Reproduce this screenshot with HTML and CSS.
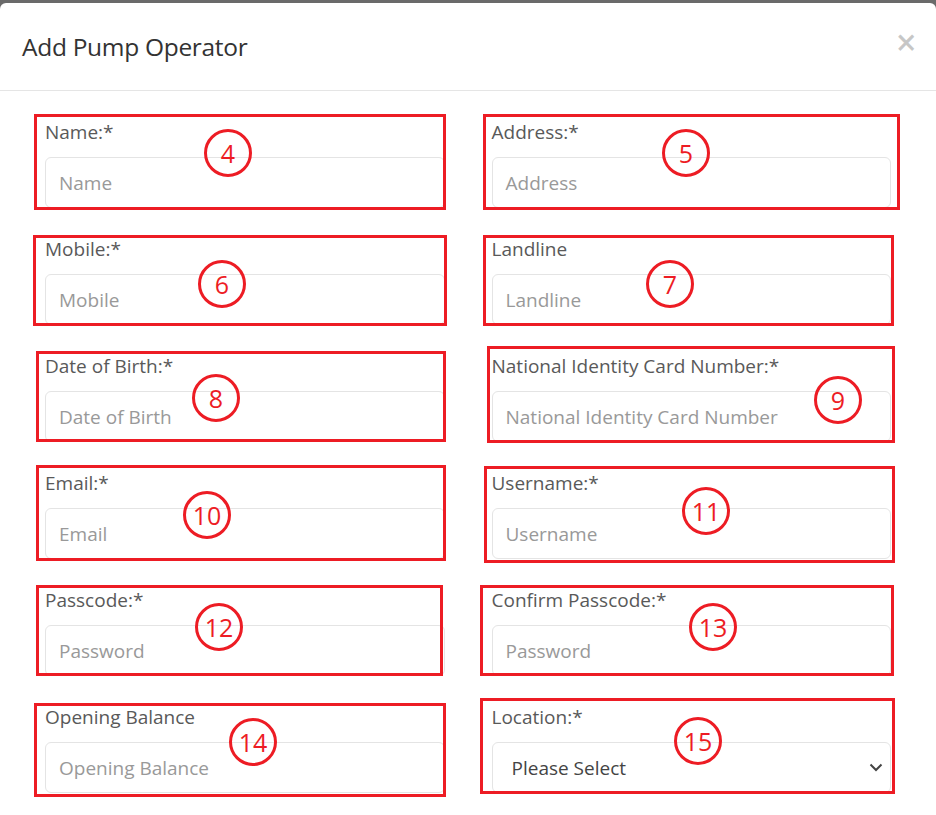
FILE: index.html
```html
<!DOCTYPE html>
<html>
<head>
<meta charset="utf-8">
<link rel="stylesheet" href="styles.css">
</head>
<body>
<div class="modal">
  <div class="modal-header">
    <h4 class="modal-title">Add Pump Operator</h4>
    <span class="close">×</span>
  </div>
  <div class="modal-body">
    <div class="grid">
      <div class="group"><label>Name:*</label><div class="input">Name</div></div>
      <div class="group"><label>Address:*</label><div class="input">Address</div></div>
      <div class="group"><label>Mobile:*</label><div class="input">Mobile</div></div>
      <div class="group"><label>Landline</label><div class="input">Landline</div></div>
      <div class="group"><label>Date of Birth:*</label><div class="input">Date of Birth</div></div>
      <div class="group"><label>National Identity Card Number:*</label><div class="input">National Identity Card Number</div></div>
      <div class="group"><label>Email:*</label><div class="input">Email</div></div>
      <div class="group"><label>Username:*</label><div class="input">Username</div></div>
      <div class="group"><label>Passcode:*</label><div class="input">Password</div></div>
      <div class="group"><label>Confirm Passcode:*</label><div class="input">Password</div></div>
      <div class="group"><label>Opening Balance</label><div class="input">Opening Balance</div></div>
      <div class="group"><label>Location:*</label><div class="input select"><span>Please Select</span><svg width="14" height="9" viewBox="0 0 14 9"><path d="M1.5 1.5 L7 7 L12.5 1.5" fill="none" stroke="#444" stroke-width="2"/></svg></div></div>
    </div>
  </div>

  <div class="anno box b4"></div><div class="anno circ c4">4</div>
  <div class="anno box b5"></div><div class="anno circ c5">5</div>
  <div class="anno box b6"></div><div class="anno circ c6">6</div>
  <div class="anno box b7"></div><div class="anno circ c7">7</div>
  <div class="anno box b8"></div><div class="anno circ c8">8</div>
  <div class="anno box b9"></div><div class="anno circ c9">9</div>
  <div class="anno box b10"></div><div class="anno circ c10">10</div>
  <div class="anno box b11"></div><div class="anno circ c11">11</div>
  <div class="anno box b12"></div><div class="anno circ c12">12</div>
  <div class="anno box b13"></div><div class="anno circ c13">13</div>
  <div class="anno box b14"></div><div class="anno circ c14">14</div>
  <div class="anno box b15"></div><div class="anno circ c15">15</div>
</div>
</body>
</html>
```
FILE: styles.css
```css
html, body {
  margin: 0;
  padding: 0;
  background: #6a6a6a;
  height: 815px;
  overflow: hidden;
}
.modal {
  position: relative;
  margin-top: 3px;
  background: #fff;
  border-radius: 6px 6px 0 0;
  height: 812px;
  font-family: "Open Sans", "Noto Sans", sans-serif;
}
.modal-header {
  height: 88px;
  box-sizing: border-box;
  border-bottom: 1px solid #e5e5e5;
  display: flex;
  align-items: center;
  justify-content: space-between;
  padding: 0 20px 0 22px;
}
.modal-title {
  margin: 0;
  font-weight: 400;
  font-size: 24.5px;
  color: #333;
  letter-spacing: -0.3px;
}
.close {
  font-size: 34px;
  font-weight: 400;
  color: #c6c6c6;
  line-height: 1;
  margin-top: -10px;
  -webkit-text-stroke: 0.6px #c6c6c6;
}
.modal-body {
  padding: 29px 45px 0 45px;
}
.grid {
  display: grid;
  grid-template-columns: 1fr 1fr;
  column-gap: 47px;
}
.group {
  margin-bottom: 29px;
}
label {
  display: block;
  font-size: 19px;
  line-height: 24px;
  color: #595959;
  margin-bottom: 13px;
}
.input {
  height: 51px;
  box-sizing: border-box;
  border: 1px solid #e4e4e4;
  border-radius: 6px;
  padding: 0 13px;
  display: flex;
  align-items: center;
  font-size: 19px;
  color: #999;
}
.select {
  justify-content: space-between;
  color: #444;
  font-size: 19px;
  padding: 0 7px 0 19px;
}
.anno {
  position: absolute;
  box-sizing: border-box;
}
.box {
  border: 3px solid #ed1c24;
}
.circ {
  width: 48px;
  height: 48px;
  border: 3px solid #ed1c24;
  border-radius: 50%;
  color: #ed1c24;
  font-family: "Open Sans", sans-serif;
  font-size: 25px;
  display: flex;
  align-items: center;
  justify-content: center;
  background: transparent;
}
.b4 { left: 34px; top: 111px; width: 412px; height: 96px; }
.c4 { left: 204px; top: 126px; }
.b5 { left: 483px; top: 111px; width: 417px; height: 96px; }
.c5 { left: 662px; top: 126px; }
.b6 { left: 33px; top: 232px; width: 414px; height: 91px; }
.c6 { left: 198px; top: 257px; }
.b7 { left: 483px; top: 232px; width: 411px; height: 91px; }
.c7 { left: 646px; top: 257px; }
.b8 { left: 36px; top: 348px; width: 410px; height: 91px; }
.c8 { left: 192px; top: 371px; }
.b9 { left: 487px; top: 343px; width: 408px; height: 97px; }
.c9 { left: 814px; top: 373px; }
.b10 { left: 36px; top: 462px; width: 410px; height: 96px; }
.c10 { left: 183px; top: 488px; }
.b11 { left: 484px; top: 463px; width: 411px; height: 97px; }
.c11 { left: 682px; top: 484px; }
.b12 { left: 36px; top: 582px; width: 407px; height: 91px; }
.c12 { left: 195px; top: 600px; }
.b13 { left: 480px; top: 582px; width: 414px; height: 91px; }
.c13 { left: 689px; top: 600px; }
.b14 { left: 34px; top: 700px; width: 412px; height: 94px; }
.c14 { left: 229px; top: 715px; }
.b15 { left: 480px; top: 695px; width: 415px; height: 96px; }
.c15 { left: 674px; top: 714px; }
```
